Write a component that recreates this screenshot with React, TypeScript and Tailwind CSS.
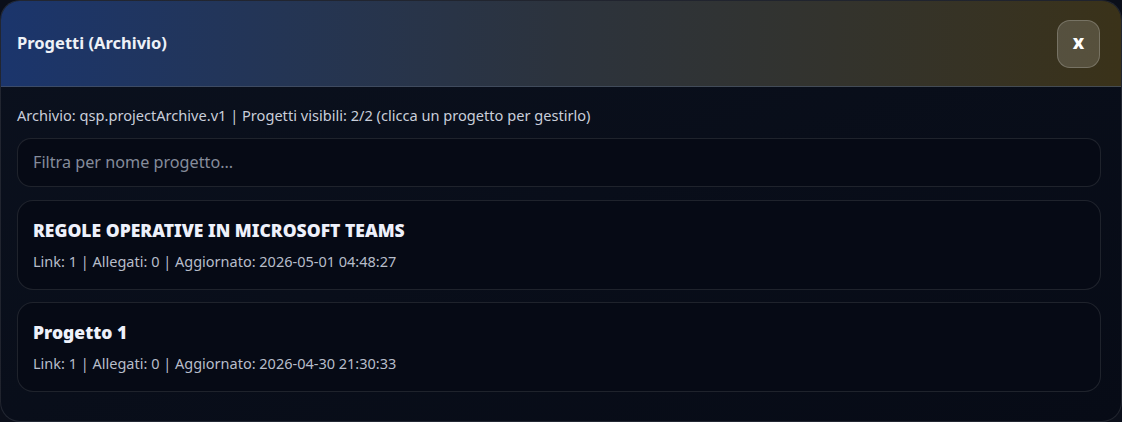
export default function App() {
  const items = [
    { name: "REGOLE OPERATIVE IN MICROSOFT TEAMS", meta: "Link: 1 | Allegati: 0 | Aggiornato: 2026-05-01 04:48:27" },
    { name: "Progetto 1", meta: "Link: 1 | Allegati: 0 | Aggiornato: 2026-04-30 21:30:33" },
  ];
  return (
    <div className="w-[1122px] h-[422px] bg-[#0b0f1a]" style={{ fontFamily: '"Noto Sans", "Open Sans", sans-serif' }}>
      <div className="w-[1122px] h-[422px] rounded-[20px] border border-white/10 overflow-hidden bg-gradient-to-br from-[#0b111e] to-[#070b16] flex flex-col">
        <div className="h-[86px] shrink-0 flex items-center justify-between pl-[16px] pr-[21px] bg-gradient-to-r from-[#1b356c] via-[#2c333d] to-[#3a3219] border-b border-[#4a5568]/70">
          <div className="text-[16.5px] font-bold text-[#eef1f7]">Progetti (Archivio)</div>
          <button className="w-[43px] h-[48px] rounded-[13px] bg-white/15 border border-white/20 text-white text-[19px] font-extrabold flex items-center justify-center leading-none pb-[2px]">
            x
          </button>
        </div>
        <div className="flex flex-col pl-[16px] pr-[20px] pt-[18px]">
          <div className="text-[14.6px] text-[#c9ceda] leading-[20px]">
            Archivio: qsp.projectArchive.v1 | Progetti visibili: 2/2 (clicca un progetto per gestirlo)
          </div>
          <div className="mt-[13px] h-[49px] rounded-[14px] border border-white/10 bg-[#060a15] flex items-center px-[15px] text-[16.2px] text-[#858c9b]">
            Filtra per nome progetto...
          </div>
          <div className="mt-[13px] flex flex-col gap-[12px]">
            {items.map((it) => (
              <div key={it.name} className="h-[90px] rounded-[16px] border border-white/10 bg-[#060a15] px-[15px] pt-[18px]">
                <div className="text-[17.5px] font-black text-[#eef1fb] leading-[22px]">{it.name}</div>
                <div className="mt-[10px] text-[14.5px] text-[#b7bdca] leading-[20px]">{it.meta}</div>
              </div>
            ))}
          </div>
        </div>
      </div>
    </div>
  );
}
